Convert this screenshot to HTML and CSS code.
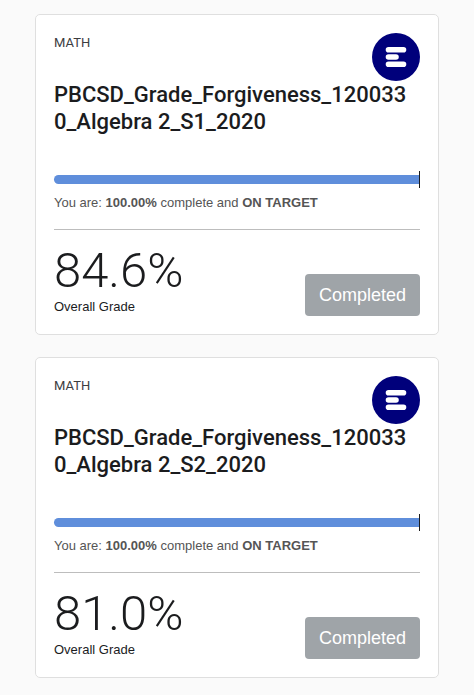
FILE: index.html
```
<!DOCTYPE html>
<html lang="en">
<head>
    <meta charset="UTF-8">
    <meta name="viewport" content="width=device-width, initial-scale=1.0">
    <title>My Courses</title>
    <link rel="stylesheet" href="styles.css">
</head>
<body>
    <main class="courses">
        <article class="card">
            <div class="card-header">
                <span class="subject">MATH</span>
                <svg class="logo" viewBox="0 0 48 48" aria-hidden="true">
                    <circle cx="24" cy="24" r="24" fill="#00007b"/>
                    <path d="M16.5 14H31.5a2.8 2.8 0 0 1 0 5.6H16.5a2.8 2.8 0 0 1 0-5.6zM16.5 21.2H24a2.8 2.8 0 0 1 0 5.6H16.5a2.8 2.8 0 0 1 0-5.6zM16.5 28.4H31.5a2.8 2.8 0 0 1 0 5.6H16.5a2.8 2.8 0 0 1 0-5.6z" fill="#fff"/>
                </svg>
            </div>
            <h2 class="title">PBCSD_Grade_Forgiveness_1200330_Algebra 2_S1_2020</h2>
            <div class="progress" role="progressbar" aria-label="Course progress" aria-valuenow="100" aria-valuemin="0" aria-valuemax="100">
                <div class="progress-bar" style="width: 100%"></div>
            </div>
            <p class="status">You are: <strong>100.00%</strong> complete and <strong>ON TARGET</strong></p>
            <div class="card-footer">
                <div>
                    <div class="grade">84.6%</div>
                    <div class="grade-label">Overall Grade</div>
                </div>
                <button type="button" class="btn">Completed</button>
            </div>
        </article>

        <article class="card">
            <div class="card-header">
                <span class="subject">MATH</span>
                <svg class="logo" viewBox="0 0 48 48" aria-hidden="true">
                    <circle cx="24" cy="24" r="24" fill="#00007b"/>
                    <path d="M16.5 14H31.5a2.8 2.8 0 0 1 0 5.6H16.5a2.8 2.8 0 0 1 0-5.6zM16.5 21.2H24a2.8 2.8 0 0 1 0 5.6H16.5a2.8 2.8 0 0 1 0-5.6zM16.5 28.4H31.5a2.8 2.8 0 0 1 0 5.6H16.5a2.8 2.8 0 0 1 0-5.6z" fill="#fff"/>
                </svg>
            </div>
            <h2 class="title">PBCSD_Grade_Forgiveness_1200330_Algebra 2_S2_2020</h2>
            <div class="progress" role="progressbar" aria-label="Course progress" aria-valuenow="100" aria-valuemin="0" aria-valuemax="100">
                <div class="progress-bar" style="width: 100%"></div>
            </div>
            <p class="status">You are: <strong>100.00%</strong> complete and <strong>ON TARGET</strong></p>
            <div class="card-footer">
                <div>
                    <div class="grade">81.0%</div>
                    <div class="grade-label">Overall Grade</div>
                </div>
                <button type="button" class="btn">Completed</button>
            </div>
        </article>
    </main>
</body>
</html>
```
FILE: styles.css
```
* {
    box-sizing: border-box;
}

body {
    margin: 0;
    background-color: #fafafa;
    color: #1b1c1e;
    font-family: "Liberation Sans", Arial, sans-serif;
    font-size: 13px;
}

.courses {
    display: flex;
    flex-direction: column;
    gap: 22px;
    padding: 14px 35px;
}

.card {
    padding: 18px;
    background-color: #fff;
    border: 1px solid #dfdfdf;
    border-radius: 5px;
}

.card-header {
    display: flex;
    justify-content: space-between;
    align-items: flex-start;
}

.subject {
    color: #3c3d3f;
    font-family: Roboto, sans-serif;
    font-size: 13px;
    line-height: 20px;
}

.logo {
    width: 48px;
    height: 48px;
}

.title {
    margin: 0 0 40px;
    padding-right: 8px;
    font-family: Roboto, sans-serif;
    font-size: 22px;
    font-weight: 500;
    line-height: 27px;
    word-break: break-all;
}

.progress {
    position: relative;
    height: 9px;
}

.progress-bar {
    height: 100%;
    background-color: #5f8edb;
    border-radius: 5px 0 0 5px;
}

/* target marker */
.progress::after {
    content: "";
    position: absolute;
    top: -4px;
    right: 0;
    width: 1px;
    height: 17px;
    background-color: #1b1c1e;
}

.status {
    margin: 0;
    padding: 10px 0 17px;
    border-bottom: 1px solid #bdbdbd;
    color: #555;
    line-height: 18px;
}

.card-footer {
    display: flex;
    justify-content: space-between;
    align-items: flex-end;
    padding-top: 14px;
}

.grade {
    font-family: Roboto, sans-serif;
    font-size: 49px;
    font-weight: 300;
    line-height: 54px;
}

.grade-label {
    line-height: 18px;
}

.btn {
    padding: 10px 14px;
    background-color: #9fa4a8;
    color: #fff;
    border: 0;
    border-radius: 4px;
    font-family: inherit;
    font-size: 18px;
    line-height: 22px;
}
```
